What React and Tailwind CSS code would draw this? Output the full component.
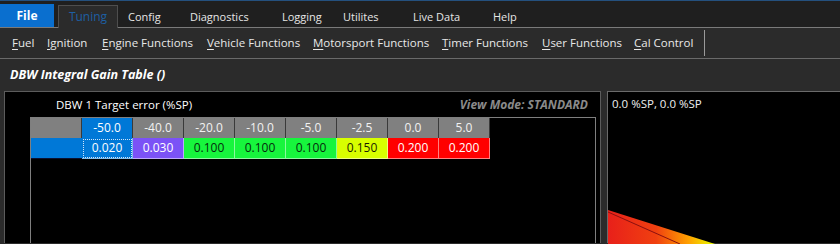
import React from "react";

const tabs = [
  { label: "Config", w: "w-[62px]" },
  { label: "Diagnostics", w: "w-[92px]" },
  { label: "Logging", w: "w-[61px]" },
  { label: "Utilites", w: "w-[70px]" },
  { label: "Live Data", w: "w-[80px]" },
  { label: "Help", w: "w-[60px]" },
];

const menu = [
  { key: "F", rest: "uel", w: "w-[35px]" },
  { key: "I", rest: "gnition", w: "w-[55px]" },
  { key: "E", rest: "ngine Functions", w: "w-[105px]" },
  { key: "V", rest: "ehicle Functions", w: "w-[106px]" },
  { key: "M", rest: "otorsport Functions", w: "w-[129px]" },
  { key: "T", rest: "imer Functions", w: "w-[100px]" },
  { key: "U", rest: "ser Functions", w: "w-[92px]" },
  { key: "C", rest: "al Control", w: "w-[70px]" },
];

const headers = ["-50.0", "-40.0", "-20.0", "-10.0", "-5.0", "-2.5", "0.0", "5.0"];

const cells = [
  { v: "0.020", cls: "bg-[#0078d7] text-white" },
  { v: "0.030", cls: "bg-[#7b52f6] text-white" },
  { v: "0.100", cls: "bg-[#17f53d] text-[#062a0c]" },
  { v: "0.100", cls: "bg-[#17f53d] text-[#062a0c]" },
  { v: "0.100", cls: "bg-[#17f53d] text-[#062a0c]" },
  { v: "0.150", cls: "bg-[#d8ff00] text-[#1c1f00]" },
  { v: "0.200", cls: "bg-[#ff0000] text-white" },
  { v: "0.200", cls: "bg-[#ff0000] text-white" },
];

export default function App() {
  return (
    <div className="w-[840px] h-[244px] overflow-hidden bg-[#2b2b2b] text-white font-['Open_Sans',sans-serif] text-[12px] leading-none">
      {/* tab strip */}
      <div className="h-[1px] bg-[#24507e]" />
      <div className="h-[27px] bg-[#1f1f1f] flex items-end border-b border-[#7a7a7a] text-[11px]">
        <div className="w-[54px] h-[23px] bg-[#0a6fcf] flex items-center justify-center font-bold text-[12px]">File</div>
        <div className="ml-[4px] w-[60px] h-[23px] -mb-[1px] bg-[#2b2b2b] border border-b-0 border-[#4e4e4e] flex items-center justify-center text-[#1d5fa3] text-[12px]">
          Tuning
        </div>
        <div className="flex h-[23px] items-center pl-[10px] pt-[1px] text-[#e6e6e6]">
          {tabs.map((t) => (
            <div key={t.label} className={t.w}>{t.label}</div>
          ))}
        </div>
      </div>

      {/* sub menu */}
      <div className="h-[31px] flex items-center pl-[12px] text-[#e8e8e8] text-[11.5px] border-b border-[#6a6a6a]">
        {menu.map((m) => (
          <div key={m.key} className={`${m.w} whitespace-nowrap`}>
            <span className="underline underline-offset-2">{m.key}</span>
            {m.rest}
          </div>
        ))}
        <div className="w-[1px] h-[26px] bg-[#9a9a9a]" />
      </div>

      {/* title */}
      <div className="h-[32px] flex items-center pl-[10px] font-bold italic text-[12.5px]">
        DBW Integral Gain Table ()
      </div>

      {/* panels */}
      <div className="flex pl-[4px] h-[152px]">
        <div className="w-[597px] bg-black border-l border-t border-r border-[#5c5c5c] flex flex-col">
          <div className="h-[25px] flex items-center justify-between pl-[51px] pr-[12px] pt-[1px]">
            <span className="text-[11.5px]">DBW 1 Target error (%SP)</span>
            <span className="font-bold italic text-[#8a8a8a]">View Mode: STANDARD</span>
          </div>
          <div className="ml-[25px] w-[566px] flex-1 border-l border-t border-r border-[#7f7f7f]">
            <div className="flex h-[20px]">
              <div className="w-[51px] bg-[#808080] border-r border-[#3a3a3a]" />
              {headers.map((h, i) => (
                <div
                  key={h}
                  className={`w-[51px] flex items-center justify-center border-r border-[#3a3a3a] ${
                    i === 0 ? "bg-[#0078d7] text-white" : "bg-[#808080] text-[#f2f2f2]"
                  }`}
                >
                  {h}
                </div>
              ))}
            </div>
            <div className="flex h-[21px]">
              <div className="w-[51px] bg-[#0078d7] border-b border-[#0b1030]" />
              {cells.map((c, i) => (
                <div
                  key={i}
                  className={`w-[51px] flex items-center justify-center border-r border-b border-white/50 ${c.cls}`}
                >
                  {i === 0 ? (
                    <div className="w-[49px] h-[19px] border border-dotted border-[#cfe3f7] flex items-center justify-center">
                      {c.v}
                    </div>
                  ) : (
                    c.v
                  )}
                </div>
              ))}
            </div>
          </div>
        </div>
        <div className="w-[6px] bg-[#2b2b2b]" />
        <div className="flex-1 bg-black border-l border-t border-[#6a6a6a] relative">
          <div className="pl-[4px] pt-[6px] text-[#f0f0f0] text-[11.5px]">0.0 %SP, 0.0 %SP</div>
          <svg className="absolute left-0 top-0" width="232" height="152">
            <defs>
              <linearGradient id="heat" x1="0" y1="0" x2="1" y2="0">
                <stop offset="0" stopColor="#e8201a" />
                <stop offset="0.45" stopColor="#f04010" />
                <stop offset="0.75" stopColor="#ffa000" />
                <stop offset="1" stopColor="#e8ff00" />
              </linearGradient>
            </defs>
            <polygon points="0,118 107,152 0,152" fill="url(#heat)" />
            <line x1="0" y1="120" x2="72" y2="152" stroke="#8a1010" strokeWidth="1" />
          </svg>
        </div>
      </div>
    </div>
  );
}
